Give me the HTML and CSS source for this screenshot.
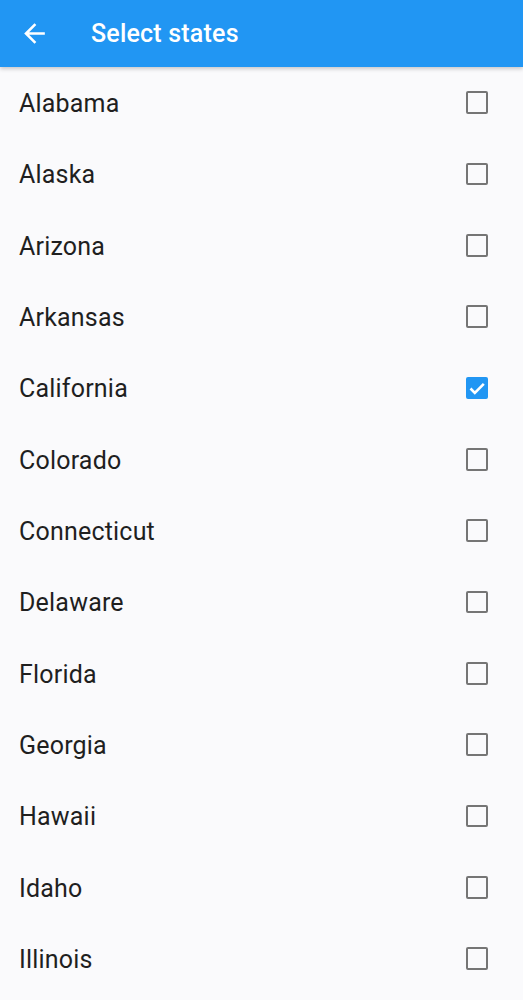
FILE: index.html
```html
<!DOCTYPE html>
<html>
<head>
<meta charset="utf-8">
<link rel="stylesheet" href="styles.css">
</head>
<body>
<header class="appbar">
  <span class="back">
    <svg viewBox="0 0 24 24" width="31" height="31"><path fill="#fff" d="M20 11H7.83l5.59-5.59L12 4l-8 8 8 8 1.41-1.41L7.83 13H20v-2z"/></svg>
  </span>
  <h1 class="title">Select states</h1>
</header>
<ul class="list">
  <li class="row"><span class="name">Alabama</span><span class="box"></span></li>
  <li class="row"><span class="name">Alaska</span><span class="box"></span></li>
  <li class="row"><span class="name">Arizona</span><span class="box"></span></li>
  <li class="row"><span class="name">Arkansas</span><span class="box"></span></li>
  <li class="row"><span class="name">California</span><span class="box checked"><svg class="check" viewBox="0 0 24 24"><path fill="none" stroke="#fff" stroke-width="2.8" d="M4.8 12.3l4.6 4.6 9.6-9.6"/></svg></span></li>
  <li class="row"><span class="name">Colorado</span><span class="box"></span></li>
  <li class="row"><span class="name">Connecticut</span><span class="box"></span></li>
  <li class="row"><span class="name">Delaware</span><span class="box"></span></li>
  <li class="row"><span class="name">Florida</span><span class="box"></span></li>
  <li class="row"><span class="name">Georgia</span><span class="box"></span></li>
  <li class="row"><span class="name">Hawaii</span><span class="box"></span></li>
  <li class="row"><span class="name">Idaho</span><span class="box"></span></li>
  <li class="row"><span class="name">Illinois</span><span class="box"></span></li>
</ul>
</body>
</html>
```

FILE: styles.css
```css
html, body {
  margin: 0;
  padding: 0;
  background: #fafafc;
  font-family: Roboto, "Noto Sans", sans-serif;
  overflow: hidden;
  height: 1000px;
}
.appbar {
  position: relative;
  z-index: 2;
  height: 67px;
  background: #2196f3;
  display: flex;
  align-items: center;
  box-shadow: 0 2px 4px rgba(0,0,0,0.2);
}
.back {
  display: flex;
  width: 31px;
  height: 31px;
  margin-left: 19px;
}
.title {
  margin: 0 0 0 41px;
  color: #fff;
  font-size: 25px;
  font-weight: 500;
  letter-spacing: 0.2px;
}
.list {
  list-style: none;
  margin: 0;
  padding: 0;
}
.row {
  height: 71.33px;
  display: flex;
  align-items: center;
  justify-content: space-between;
  padding: 0 35px 0 19px;
  box-sizing: border-box;
}
.name {
  font-size: 25px;
  color: #1f1f1f;
  letter-spacing: 0.2px;
  padding-top: 2px;
}
.box {
  flex: none;
  width: 22.5px;
  height: 22.5px;
  box-sizing: border-box;
  border: 2.7px solid #757575;
  border-radius: 2px;
  display: flex;
  align-items: center;
  justify-content: center;
}
.box.checked {
  background: #2196f3;
  border: 0;
}
.check {
  width: 22.5px;
  height: 22.5px;
}
```
